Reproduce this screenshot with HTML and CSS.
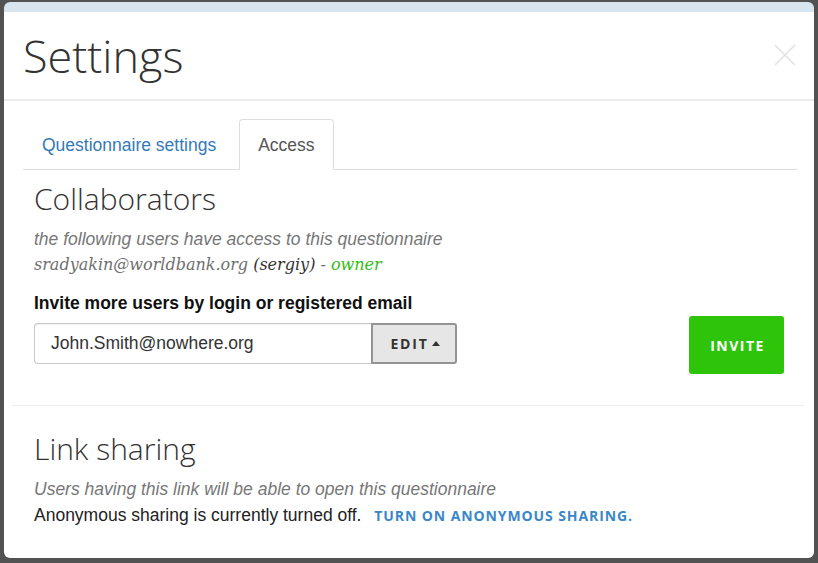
FILE: index.html
```html
<!DOCTYPE html>
<html lang="en">
<head>
<meta charset="utf-8">
<title>Settings</title>
<link rel="stylesheet" href="styles.css">
</head>
<body>
<div class="modal">
  <div class="modal-header">
    <h1 class="modal-title">Settings</h1>
    <button class="close" aria-label="Close">
      <svg width="22" height="22" viewBox="0 0 22 22"><path d="M1 1L21 21M21 1L1 21" stroke="#e3e3e3" stroke-width="1.6" fill="none"/></svg>
    </button>
  </div>
  <div class="modal-body">
    <ul class="tabs">
      <li class="tab"><a href="#">Questionnaire settings</a></li>
      <li class="tab active"><a href="#">Access</a></li>
    </ul>
    <div class="tab-content">
      <h2 class="section-title">Collaborators</h2>
      <p class="muted">the following users have access to this questionnaire</p>
      <p class="owner-line"><span class="email">sradyakin@worldbank.org</span> <span class="login">(sergiy)</span> - <span class="role">owner</span></p>
      <p class="label">Invite more users by login or registered email</p>
      <div class="invite-row">
        <div class="input-group">
          <div class="input">John.Smith@nowhere.org</div>
          <button class="edit-btn">EDIT <span class="caret"></span></button>
        </div>
        <button class="invite-btn">INVITE</button>
      </div>
      <hr class="sep">
      <h2 class="section-title">Link sharing</h2>
      <p class="muted sharing-note">Users having this link will be able to open this questionnaire</p>
      <p class="status">Anonymous sharing is currently turned off. <a href="#" class="turn-on">TURN ON ANONYMOUS SHARING.</a></p>
    </div>
  </div>
</div>
</body>
</html>
```
FILE: styles.css
```css
* { box-sizing: border-box; }
html, body { height: 563px; overflow: hidden; }
body {
  margin: 0;
  padding: 2px 4px 0;
  background: #525252;
  font-family: "Liberation Sans", Arial, sans-serif;
  font-size: 17.5px;
  color: #222;
}
.modal {
  width: 810px;
  height: 556px;
  background: #fff;
  border-radius: 6px;
  border-top: 10px solid #d8e4ee;
  overflow: hidden;
}
.modal-header {
  height: 89px;
  display: flex;
  align-items: center;
  justify-content: space-between;
  padding: 0 18px 0 19px;
  border-bottom: 2px solid #ebebeb;
}
.modal-title {
  margin: 0;
  font-family: "Open Sans", sans-serif;
  font-weight: 300;
  font-size: 45px;
  line-height: 48px;
  color: #333;
}
.close {
  border: 0;
  background: none;
  padding: 0;
  width: 22px;
  height: 22px;
  display: block;
  margin-top: -2px;
}
.close svg { display: block; }
.modal-body {
  padding: 18px 17px 0 19px;
}
.tabs {
  list-style: none;
  margin: 0;
  padding: 0;
  display: flex;
  border-bottom: 1px solid #ddd;
  height: 51px;
}
.tab {
  margin-right: 4px;
  margin-bottom: -1px;
}
.tab a {
  display: block;
  padding: 2px 18px 0;
  line-height: 47px;
  border: 1px solid transparent;
  border-radius: 4px 4px 0 0;
  color: #337ab7;
  text-decoration: none;
}
.tab.active a {
  color: #555;
  background: #fff;
  border-color: #ddd;
  border-bottom-color: #fff;
}
.tab-content {
  padding: 0 12px 0 11px;
}
.section-title {
  margin: 13px 0 0;
  font-family: "Open Sans", sans-serif;
  font-weight: 300;
  font-size: 30px;
  line-height: 32px;
  color: #333;
}
p { margin: 0; line-height: 26px; }
.muted {
  margin-top: 11px;
  font-style: italic;
  color: #777;
}
.owner-line {
  font-family: "DejaVu Serif", serif;
  font-style: italic;
  font-size: 16px;
  color: #6f6f6f;
}
.owner-line .login { color: #333; }
.owner-line .role { color: #33bd12; }
.label {
  margin-top: 12px;
  font-weight: bold;
  color: #111;
}
.invite-row {
  display: flex;
  justify-content: space-between;
  align-items: flex-start;
  height: 58px;
}
.input-group {
  display: flex;
  margin-top: 7px;
  height: 41px;
}
.input {
  width: 337px;
  height: 41px;
  border: 1px solid #c8c8c8;
  border-right: 0;
  border-radius: 4px 0 0 4px;
  box-shadow: inset 0 1px 1px rgba(0,0,0,0.06);
  padding: 0 16px;
  line-height: 39px;
  color: #333;
}
.edit-btn {
  width: 86px;
  height: 41px;
  background: #e6e6e6;
  border: 2px solid #949494;
  border-radius: 0 3px 3px 0;
  font-family: "Open Sans", sans-serif;
  font-weight: 700;
  font-size: 14px;
  letter-spacing: 1.8px;
  color: #333;
  padding: 0 0 0 2px;
  display: flex;
  align-items: center;
  justify-content: center;
}
.caret {
  display: inline-block;
  width: 0;
  height: 0;
  border-left: 4.5px solid transparent;
  border-right: 4.5px solid transparent;
  border-bottom: 5px solid #333;
  margin-left: 3px;
  margin-bottom: 1px;
}
.invite-btn {
  width: 95px;
  height: 58px;
  margin-right: 1px;
  background: #2dc40a;
  border: 0;
  border-radius: 3px;
  color: #fff;
  font-family: "Open Sans", sans-serif;
  font-weight: 700;
  font-size: 14px;
  letter-spacing: 1.5px;
  padding: 0 0 0 2px;
}
.sep {
  border: 0;
  border-top: 1px solid #eee;
  margin: 31px -19px 0 -22px;
}
.sep + .section-title { margin-top: 27px; }
.status { color: #222; }
.turn-on {
  margin-left: 8px;
  font-family: "Open Sans", sans-serif;
  font-weight: 700;
  font-size: 14px;
  letter-spacing: 0.9px;
  color: #3a87c8;
  text-decoration: none;
}
```
